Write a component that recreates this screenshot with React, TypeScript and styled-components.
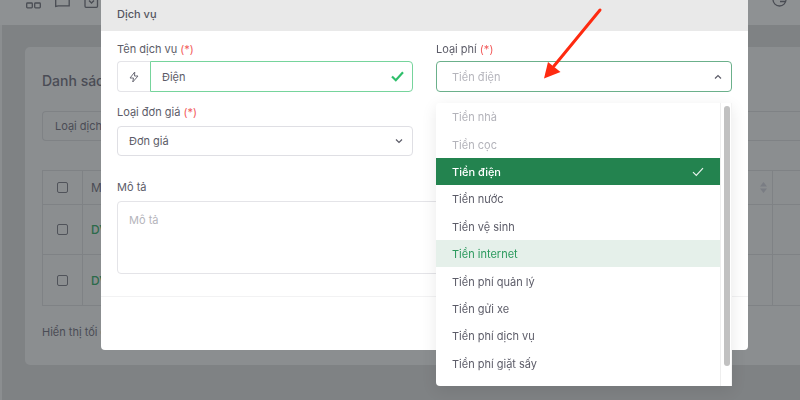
import React from 'react';
import styled, { createGlobalStyle } from 'styled-components';

const GlobalStyle = createGlobalStyle`
  html, body {
    margin: 0;
    height: 100%;
    overflow: hidden;
    background: #7f8284;
  }
  * {
    box-sizing: border-box;
  }
  body {
    font-family: Inter, "Noto Sans", sans-serif;
    font-size: 11px;
    -webkit-font-smoothing: antialiased;
  }
`;

const Page = styled.div`
  position: relative;
  width: 800px;
  height: 400px;
  overflow: hidden;
  filter: blur(0.4px);
`;

const Topbar = styled.div`
  height: 25px;
  background: #8e9193;
  display: flex;
  justify-content: space-between;
  padding: 0 13px 0 26px;
  color: #4a4d54;
`;

const TopbarGroup = styled.div`
  display: flex;
  gap: 14px;
`;

const TopIcon = styled.svg`
  display: block;
  width: 15px;
  height: 9px;
  fill: none;
  stroke: currentColor;
  stroke-width: 1.3;
`;

const Main = styled.div`
  height: 375px;
  padding: 22px 0 0 25px;
  border-left: 2px solid #8b8e90;
`;

const Card = styled.div`
  width: 800px;
  height: 318px;
  margin-left: -2px;
  padding: 25px 17px;
  background: #8b8e90;
  border-radius: 5px 0 0 5px;
  color: #4a4c55;
`;

const CardTitle = styled.div`
  font-size: 14px;
  font-weight: 500;
  line-height: 18px;
  white-space: nowrap;
`;

const Filter = styled.div`
  height: 30px;
  margin-top: 21px;
  padding-left: 12px;
  display: flex;
  align-items: center;
  border: 1px solid #7f8285;
  border-right: none;
  border-radius: 4px 0 0 4px;
  white-space: nowrap;
`;

const Table = styled.div`
  margin-top: 29px;
  border: 1px solid #7f8285;
  border-right: none;
`;

const TableRow = styled.div<{ $height: number }>`
  height: ${p => p.$height}px;
  display: grid;
  grid-template-columns: 40px 1fr 35px;
  border-bottom: 1px solid #7f8285;

  &:last-child {
    border-bottom: none;
  }
`;

const CheckCell = styled.div`
  display: flex;
  align-items: center;
  justify-content: center;
  border-right: 1px solid #7f8285;
`;

const CheckBox = styled.span`
  width: 11px;
  height: 11px;
  border: 1px solid #50535a;
  border-radius: 2px;
`;

const NameCell = styled.div<{ $code?: boolean }>`
  display: flex;
  align-items: center;
  justify-content: space-between;
  padding: 0 0 0 8px;
  border-right: 1px solid #7f8285;
  color: ${p => (p.$code ? '#2c6a4a' : '#4a4c55')};
  font-size: 12px;
  font-weight: ${p => (p.$code ? 500 : 400)};
`;

const SortIcon = styled.svg`
  width: 7px;
  height: 11px;
  margin-right: 5px;
  fill: #7a7d84;
`;

const ActionCell = styled.div`
  display: flex;
  align-items: center;
  justify-content: flex-end;
`;

const ActionDot = styled.span`
  width: 2px;
  height: 7px;
  background: #4a4c55;
`;

const CardFooter = styled.div`
  margin-top: 19px;
  white-space: nowrap;
`;

const Modal = styled.div`
  position: absolute;
  left: 101px;
  top: 0;
  width: 647px;
  height: 350px;
  background: #fff;
  border-radius: 0 0 4px 4px;
  color: #5c5c68;
`;

const ModalHeader = styled.div`
  height: 31px;
  padding: 0 16px 4px;
  display: flex;
  align-items: center;
  background: #e9e9e9;
  font-weight: 500;
  color: #55555f;
`;

const ModalBody = styled.div`
  height: 266px;
  padding: 11px 16px 0;
  display: grid;
  grid-template-columns: 296px 296px;
  grid-template-rows: 50px 50px 94px;
  column-gap: 23px;
  row-gap: 13px;
  border-bottom: 1px solid #f2f2f3;
`;

const Field = styled.div<{ $wide?: boolean }>`
  grid-column: ${p => (p.$wide ? '1 / 3' : 'auto')};
  margin-top: ${p => (p.$wide ? '12px' : '0')};
`;

const Label = styled.div`
  height: 19px;
  line-height: 14px;
`;

const SelectLabel = styled(Label)`
  height: 21px;
`;

const Required = styled.span`
  color: #f25a5a;
`;

const InputGroup = styled.div`
  display: flex;
  height: 31px;
`;

const Prefix = styled.div`
  width: 33px;
  display: flex;
  align-items: center;
  justify-content: center;
  border: 1px solid #e4e4e8;
  border-right: none;
  border-radius: 4px 0 0 4px;
  color: #6b6b76;
`;

const ValidInput = styled.div`
  flex: 1;
  padding: 0 8px 0 11px;
  display: flex;
  align-items: center;
  justify-content: space-between;
  border: 1px solid #76d49c;
  border-radius: 0 4px 4px 0;
`;

const SelectBox = styled.div<{ $open?: boolean }>`
  height: ${p => (p.$open ? 31 : 30)}px;
  margin-top: ${p => (p.$open ? '-2px' : '0')};
  padding: 0 7px 0 ${p => (p.$open ? 15 : 11)}px;
  display: flex;
  align-items: center;
  justify-content: space-between;
  border: 1px solid ${p => (p.$open ? '#6bb08b' : '#dfdfe4')};
  border-radius: 4px;
  color: ${p => (p.$open ? '#b5b5bc' : '#5c5c68')};
`;

const TextArea = styled.div`
  height: 73px;
  padding: 11px;
  border: 1px solid #e4e4e8;
  border-radius: 4px;
  color: #b5b5bc;
`;

const Dropdown = styled.div`
  position: absolute;
  left: 436px;
  top: 103px;
  width: 296px;
  height: 283px;
  display: flex;
  background: #fff;
  border-radius: 4px 4px 0 4px;
  box-shadow: 0 4px 16px rgba(0, 0, 0, 0.09);
`;

const OptionList = styled.div`
  flex: 1;
`;

const Option = styled.div<{ $state?: 'disabled' | 'selected' | 'hover' }>`
  height: 27.4px;
  padding: 1px 16px 0;
  display: flex;
  align-items: center;
  justify-content: space-between;
  font-weight: ${p => (p.$state === 'selected' ? 500 : 400)};
  background: ${p =>
    p.$state === 'selected' ? '#23834f' : p.$state === 'hover' ? '#e5f0ea' : 'transparent'};
  color: ${p =>
    p.$state === 'selected'
      ? '#fff'
      : p.$state === 'hover'
        ? '#2c9a5e'
        : p.$state === 'disabled'
          ? '#b3b3ba'
          : '#5c5c68'};
`;

const ScrollTrack = styled.div`
  width: 12px;
  padding: 3px;
  border-left: 1px solid #eeeeee;
  border-right: 1px solid #f4f4f4;
`;

const ScrollThumb = styled.div`
  width: 6px;
  height: 260px;
  background: #c1c1c1;
  border-radius: 3px;
`;

const Arrow = styled.svg`
  position: absolute;
  left: 535px;
  top: 0;
  width: 75px;
  height: 90px;
`;

const options: { label: string; state?: 'disabled' | 'selected' | 'hover' }[] = [
  { label: 'Tiền nhà', state: 'disabled' },
  { label: 'Tiền cọc', state: 'disabled' },
  { label: 'Tiền điện', state: 'selected' },
  { label: 'Tiền nước' },
  { label: 'Tiền vệ sinh' },
  { label: 'Tiền internet', state: 'hover' },
  { label: 'Tiền phí quản lý' },
  { label: 'Tiền gửi xe' },
  { label: 'Tiền phí dịch vụ' },
  { label: 'Tiền phí giặt sấy' },
];

const Chevron = ({ up }: { up?: boolean }) => (
  <svg width="12" height="12" viewBox="0 0 12 12" fill="none" stroke="#5c5c68" strokeWidth="1.2">
    <path d={up ? 'M3 7.5 6 4.5l3 3' : 'M3 4.5 6 7.5l3-3'} />
  </svg>
);

const App: React.FC = () => (
  <Page>
    <GlobalStyle />
    <Topbar>
      <TopbarGroup>
        <TopIcon viewBox="0 0 15 9">
          <rect x="0.7" y="3" width="5.6" height="4.8" rx="0.8" />
          <rect x="8.7" y="3" width="5.6" height="4.8" rx="0.8" />
        </TopIcon>
        <TopIcon viewBox="0 0 15 9">
          <path d="M.7-3v9.5l2.5-.6h11V-3" />
        </TopIcon>
        <TopIcon viewBox="0 0 15 9">
          <path d="M1-3v9.3q0 1 1 1h10.500q1 0 1-1V-3M5 .5l2.500 2.500L10 .5" />
        </TopIcon>
      </TopbarGroup>
      <TopIcon viewBox="0 0 15 9">
        <path d="M1-.5a6.500 6.500 0 1 0 13 0M8 1.500h6" />
      </TopIcon>
    </Topbar>
    <Main>
      <Card>
        <CardTitle>Danh sách</CardTitle>
        <Filter>Loại dịch vụ</Filter>
        <Table>
          <TableRow $height={34}>
            <CheckCell>
              <CheckBox />
            </CheckCell>
            <NameCell>
              Mã
              <SortIcon viewBox="0 0 7 11">
                <path d="M3.500 0 7 4.500H0zM3.500 11 0 6.500h7z" />
              </SortIcon>
            </NameCell>
            <ActionCell />
          </TableRow>
          <TableRow $height={50}>
            <CheckCell>
              <CheckBox />
            </CheckCell>
            <NameCell $code>DV1</NameCell>
            <ActionCell>
              <ActionDot />
            </ActionCell>
          </TableRow>
          <TableRow $height={50}>
            <CheckCell>
              <CheckBox />
            </CheckCell>
            <NameCell $code>DV2</NameCell>
            <ActionCell>
              <ActionDot />
            </ActionCell>
          </TableRow>
        </Table>
        <CardFooter>Hiển thị tối đa</CardFooter>
      </Card>
    </Main>
    <Modal>
      <ModalHeader>Dịch vụ</ModalHeader>
      <ModalBody>
        <Field>
          <Label>
            Tên dịch vụ <Required>(*)</Required>
          </Label>
          <InputGroup>
            <Prefix>
              <svg width="12" height="12" viewBox="0 0 24 24" fill="none" stroke="currentColor" strokeWidth="2" strokeLinejoin="round">
                <path d="M13.500 2 4 14h7l-1.500 8L20 10h-7z" />
              </svg>
            </Prefix>
            <ValidInput>
              Điện
              <svg width="13" height="11" viewBox="0 0 13 11" fill="none" stroke="#2fbf6b" strokeWidth="2.200">
                <path d="M1 5.500 4.800 9.200 12 1.300" />
              </svg>
            </ValidInput>
          </InputGroup>
        </Field>
        <Field>
          <SelectLabel>
            Loại phí <Required>(*)</Required>
          </SelectLabel>
          <SelectBox $open>
            Tiền điện
            <Chevron up />
          </SelectBox>
        </Field>
        <Field>
          <SelectLabel>
            Loại đơn giá <Required>(*)</Required>
          </SelectLabel>
          <SelectBox>
            Đơn giá
            <Chevron />
          </SelectBox>
        </Field>
        <Field />
        <Field $wide>
          <SelectLabel>Mô tả</SelectLabel>
          <TextArea>Mô tả</TextArea>
        </Field>
      </ModalBody>
    </Modal>
    <Dropdown>
      <OptionList>
        {options.map(o => (
          <Option key={o.label} $state={o.state}>
            {o.label}
            {o.state === 'selected' && (
              <svg width="12" height="10" viewBox="0 0 12 10" fill="none" stroke="#e8f3ed" strokeWidth="1.200">
                <path d="M1 5.200 4.300 8.500 11 1.200" />
              </svg>
            )}
          </Option>
        ))}
      </OptionList>
      <ScrollTrack>
        <ScrollThumb />
      </ScrollTrack>
    </Dropdown>
    <Arrow viewBox="535 0 75 90">
      <path d="M600 10 554 66" stroke="#fe2a10" strokeWidth="3" strokeLinecap="round" fill="none" />
      <path d="M544 78.500 548 62 560.500 72z" fill="#fe2a10" />
    </Arrow>
  </Page>
);

export default App;
